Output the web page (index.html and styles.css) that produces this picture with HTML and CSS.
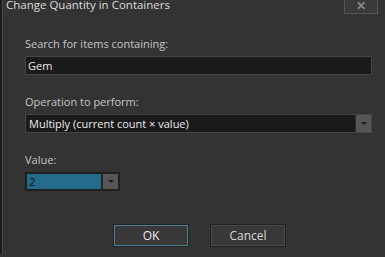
FILE: index.html
```html
<!DOCTYPE html>
<html lang="en">
<head>
    <meta charset="UTF-8">
    <title>Change Quantity in Containers</title>
    <link rel="stylesheet" href="styles.css">
</head>
<body>
    <div class="dialog">
        <div class="titlebar">
            <span class="title">Change Quantity in Containers</span>
            <button class="close">&#x2715;</button>
        </div>

        <div class="form">
            <label class="label">Search for items containing:</label>
            <div class="input">Gem</div>

            <label class="label">Operation to perform:</label>
            <div class="select">
                <span class="select-text">Multiply (current count &times; value)</span>
                <span class="arrow"><i class="tri"></i></span>
            </div>

            <label class="label">Value:</label>
            <div class="combo">
                <span class="combo-text">2</span>
                <span class="arrow"><i class="tri"></i></span>
            </div>
        </div>

        <div class="buttons">
            <button class="button focused">OK</button>
            <button class="button">Cancel</button>
        </div>
    </div>
</body>
</html>
```

FILE: styles.css
```css
body {
    margin: 0;
    background-color: #333333;
    font-family: "Open Sans", "Noto Sans", sans-serif;
    overflow: hidden;
}

.dialog {
    height: 257px;
    border-left: 2px solid #1c1c1c;
    box-shadow: inset 1px 0 #4a4a4a;
    box-sizing: border-box;
    background-color: #333333;
}

.titlebar {
    display: flex;
    justify-content: space-between;
    align-items: flex-start;
    height: 18px;
    margin-top: -3px;
    padding-left: 4px;
    padding-right: 7px;
}

.title {
    color: #dcdcdc;
    font-family: "Open Sans", "Noto Sans", sans-serif;
    font-size: 11.5px;
    line-height: 15px;
}

.close {
    width: 34px;
    height: 17px;
    background-color: #3a3a3a;
    border: 1px solid #555;
    color: #8a8a8a;
    font-size: 12px;
    font-weight: bold;
    line-height: 14px;
    padding: 1px 0 0 0;
    margin: 0;
}

.form {
    display: flex;
    flex-direction: column;
    padding: 0 13px 0 23px;
}

.label {
    color: #c6c6c6;
    font-size: 11px;
    line-height: 14px;
    margin-top: 20px;
    margin-bottom: 5px;
}

.label:first-child {
    margin-top: 22px;
}

.input,
.select {
    height: 19px;
    box-sizing: border-box;
    background-color: #1a1a1a;
    border: 1px solid #454545;
    color: #ececec;
    font-size: 11px;
    line-height: 17px;
    padding-left: 2px;
}

.select {
    display: flex;
    justify-content: space-between;
    padding-left: 3px;
    padding-right: 0;
}

.arrow {
    width: 15px;
    height: 17px;
    background-color: #565656;
    display: flex;
    align-items: center;
    justify-content: center;
    border-left: 1px solid #2a2a2a;
}

.tri {
    width: 0;
    height: 0;
    border-left: 3px solid transparent;
    border-right: 3px solid transparent;
    border-top: 3px solid #1e1e1e;
}

.combo {
    width: 95px;
    height: 19px;
    box-sizing: border-box;
    display: flex;
    border: 1px dotted #1a1a1a;
    background-color: #222;
    padding: 1px;
}

.combo-text {
    flex: 1;
    background-color: #246a8a;
    color: #111;
    font-size: 11px;
    line-height: 15px;
    padding-left: 2px;
    margin-right: 1px;
}

.combo .arrow {
    height: 15px;
}

.buttons {
    display: flex;
    gap: 21px;
    padding-left: 111px;
    margin-top: 33px;
}

.button {
    width: 76px;
    height: 23px;
    background-color: #383838;
    border: 1px solid #222;
    box-shadow: inset 0 0 0 1px #4a4a4a;
    color: #d8d8d8;
    font-family: "Open Sans", "Noto Sans", sans-serif;
    font-size: 12px;
    padding: 0;
}

.button.focused {
    box-shadow: inset 0 0 0 1px #4d7d99;
    color: #ececec;
}
```
